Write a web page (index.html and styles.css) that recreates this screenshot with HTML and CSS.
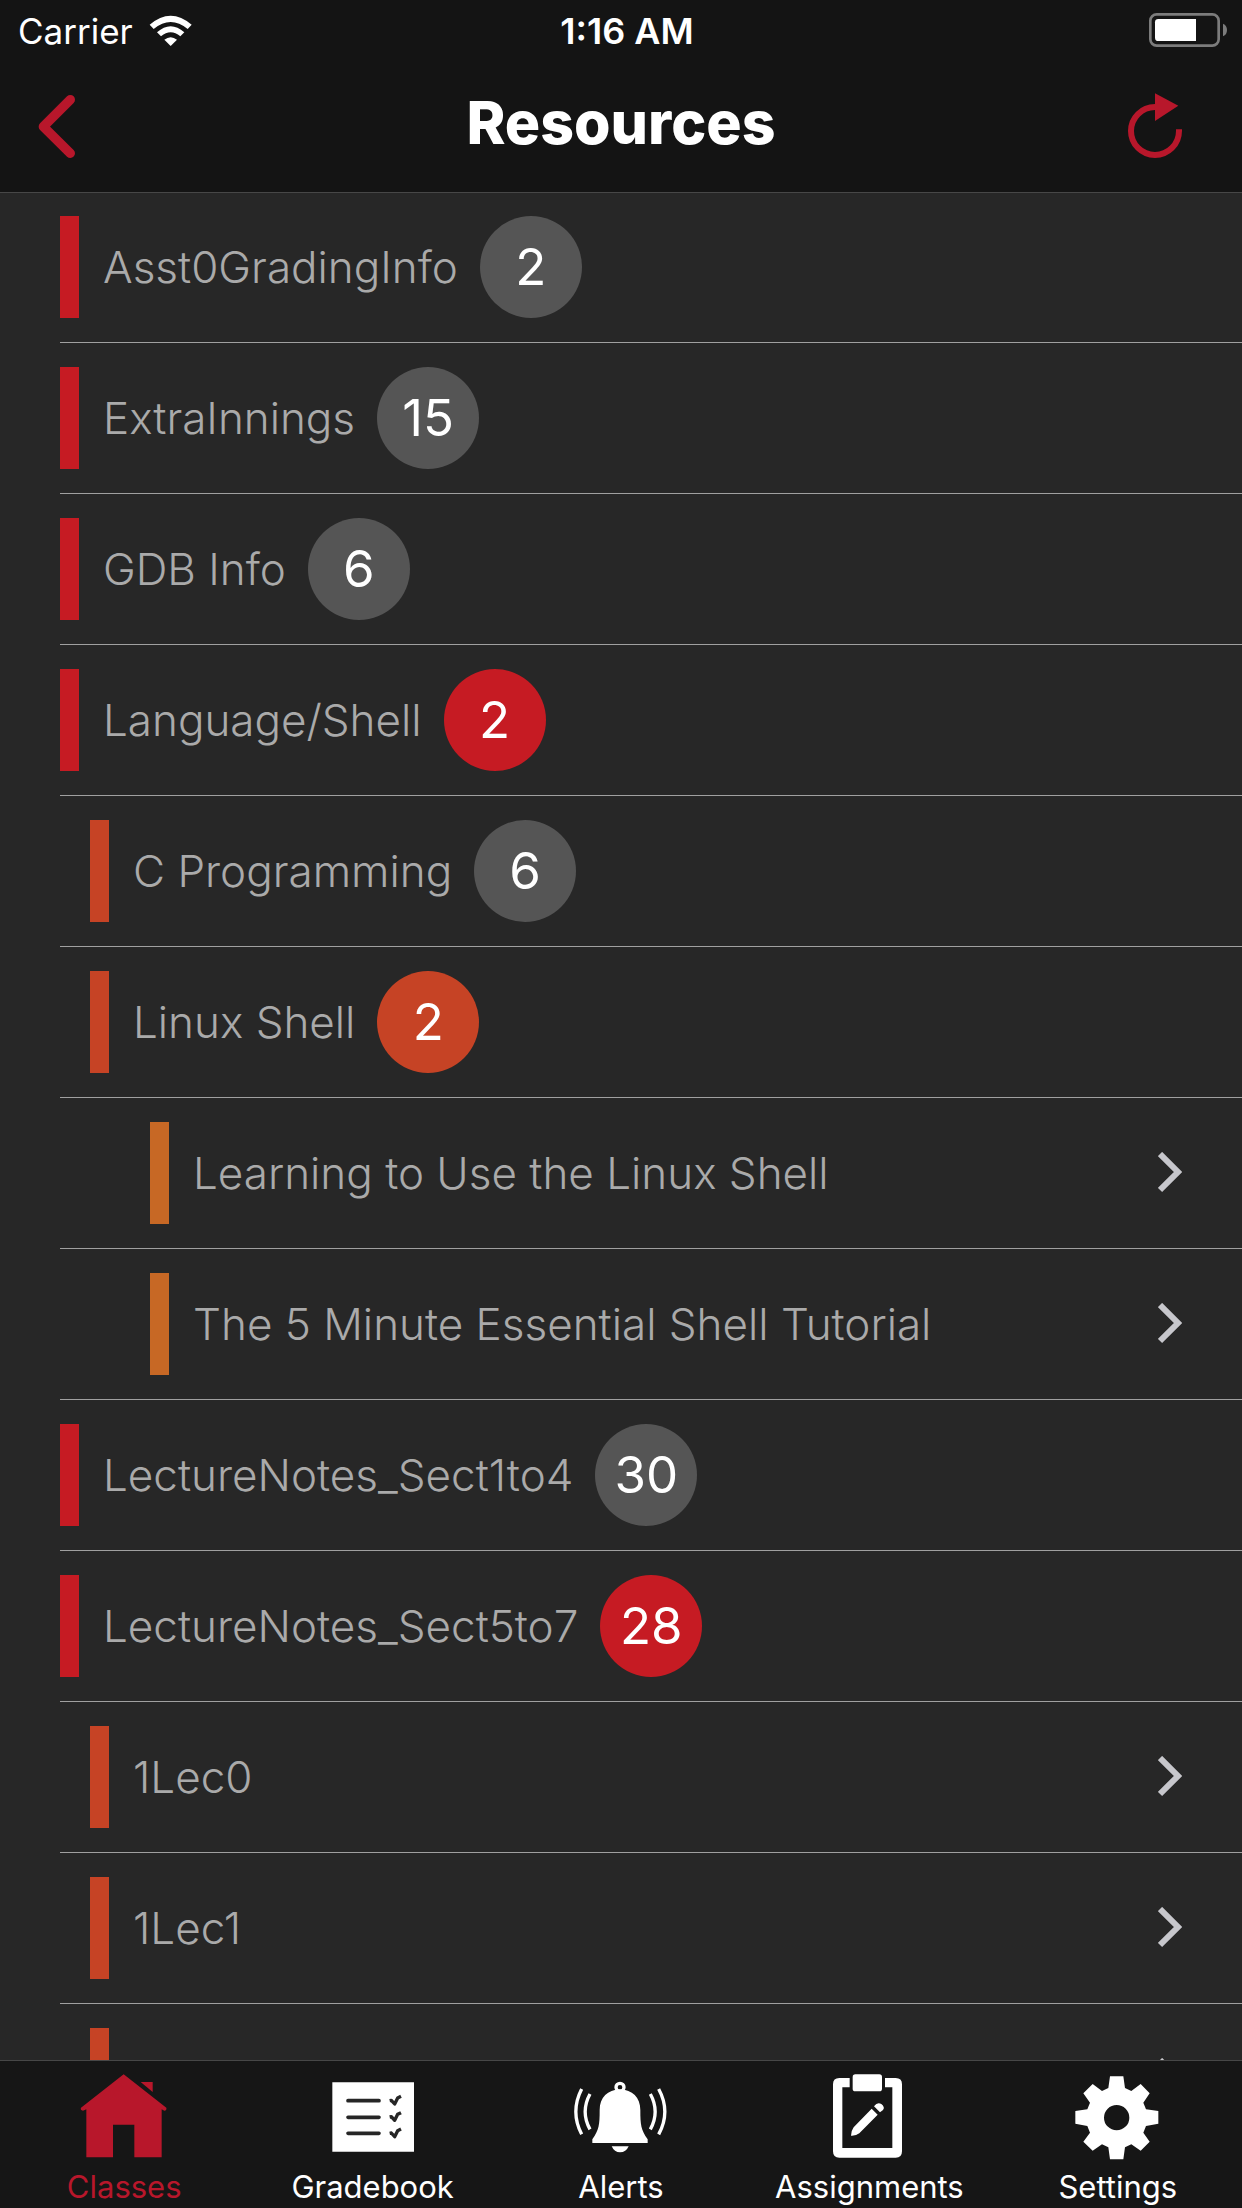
FILE: index.html
```html
<!DOCTYPE html>
<html lang="en">
<head>
<meta charset="utf-8">
<meta name="viewport" content="width=device-width, initial-scale=1">
<title>Resources</title>
<link rel="stylesheet" href="styles.css">
</head>
<body>
<div class="app">
  <header class="header">
    <div class="status">
      <div class="status-left">
        <span>Carrier</span>
        <svg class="wifi" viewBox="448 42 132 96" aria-hidden="true">
          <path d="M450 71Q513 17 576 71L564 84Q513 42 462 84Z"/>
          <path d="M472 94Q513 58 554 94L542 106Q513 82 484 106Z"/>
          <path d="M494 116Q513 101 532 116L513 135Z"/>
        </svg>
      </div>
      <span class="time">1:16 AM</span>
      <svg class="battery" viewBox="204 39 240 108" aria-hidden="true">
        <rect class="battery-case" x="211" y="43" width="205" height="94" rx="19"/>
        <path class="battery-level" d="M235 57H348V123H235Q225 123 225 113V67Q225 57 235 57Z"/>
        <path class="battery-cap" d="M429 71Q441 76 441 90Q441 104 429 109Z"/>
      </svg>
    </div>
    <div class="nav">
      <button class="nav-button" type="button" aria-label="Back">
        <svg class="nav-icon" viewBox="114 279 114 198" aria-hidden="true"><path class="back-line" d="M211 299L130 380L211 460"/></svg>
      </button>
      <h1 class="title">Resources</h1>
      <button class="nav-button nav-button-end" type="button" aria-label="Refresh">
        <svg class="nav-icon" viewBox="138 279 168 198" aria-hidden="true">
          <path class="refresh-line" d="M228 321H225A72 72 0 1 0 297 393V388"/>
          <path class="refresh-head" d="M225 280L295 317L225 363Z"/>
        </svg>
      </button>
    </div>
  </header>

  <main class="content">
    <ul class="list">
      <li><button class="row level-1" type="button"><span class="label">Asst0GradingInfo</span><span class="badge">2</span></button></li>
      <li><button class="row level-1" type="button"><span class="label">ExtraInnings</span><span class="badge">15</span></button></li>
      <li><button class="row level-1" type="button"><span class="label">GDB Info</span><span class="badge">6</span></button></li>
      <li><button class="row level-1 open" type="button" aria-expanded="true"><span class="label">Language/Shell</span><span class="badge">2</span></button></li>
      <li><button class="row level-2" type="button"><span class="label">C Programming</span><span class="badge">6</span></button></li>
      <li><button class="row level-2 open" type="button" aria-expanded="true"><span class="label">Linux Shell</span><span class="badge">2</span></button></li>
      <li><a class="row level-3" href="#learning"><span class="label">Learning to Use the Linux Shell</span><svg class="chevron" viewBox="0 0 24 42" aria-hidden="true"><path d="M2 2L20 20L2 38"/></svg></a></li>
      <li><a class="row level-3" href="#tutorial"><span class="label">The 5 Minute Essential Shell Tutorial</span><svg class="chevron" viewBox="0 0 24 42" aria-hidden="true"><path d="M2 2L20 20L2 38"/></svg></a></li>
      <li><button class="row level-1" type="button"><span class="label">LectureNotes_Sect1to4</span><span class="badge">30</span></button></li>
      <li><button class="row level-1 open" type="button" aria-expanded="true"><span class="label">LectureNotes_Sect5to7</span><span class="badge">28</span></button></li>
      <li><a class="row level-2" href="#lec0"><span class="label">1Lec0</span><svg class="chevron" viewBox="0 0 24 42" aria-hidden="true"><path d="M2 2L20 20L2 38"/></svg></a></li>
      <li><a class="row level-2" href="#lec1"><span class="label">1Lec1</span><svg class="chevron" viewBox="0 0 24 42" aria-hidden="true"><path d="M2 2L20 20L2 38"/></svg></a></li>
      <li><a class="row level-2" href="#lec2" aria-label="Next lecture"><svg class="chevron" viewBox="0 0 24 42" aria-hidden="true"><path d="M2 2L20 20L2 38"/></svg></a></li>
    </ul>
  </main>

  <nav class="tabs" aria-label="Main">
    <a class="tab active" href="#classes" aria-current="page">
      <svg class="tab-icon" viewBox="228 60 288 270" aria-hidden="true">
        <path d="M371 73L499 173Q501 181 493 182L485 178V322H403V224H339V322H259V178L249 182Q240 180 243 173Z"/>
        <path d="M422 96H458V126Z"/>
      </svg>
      <span>Classes</span>
    </a>
    <a class="tab" href="#gradebook">
      <svg class="tab-icon" viewBox="224 60 288 270" aria-hidden="true">
        <path d="M246 97H491V305H246Z"/>
        <path class="ink-thick" d="M293 152H386M293 202H386M293 250H386"/>
        <path class="ink" d="M418 152L423 151L433 162L442 144L452 139M418 201L423 200L433 211L442 193L452 188M418 250L423 249L433 260L442 242L452 237"/>
      </svg>
      <span>Gradebook</span>
    </a>
    <a class="tab" href="#alerts">
      <svg class="tab-icon" viewBox="219 60 288 270" aria-hidden="true">
        <circle class="line" cx="360" cy="112" r="12"/>
        <path d="M360 118C397 119 421 143 421 180C421 225 423 239 443 268V279H277V268C297 239 299 225 299 180C299 143 323 119 360 118Z"/>
        <path d="M335 289H386Q378 307 360 307Q343 307 335 289Z"/>
        <path class="line" d="M270 132Q241 185 270 238M245 117Q210 185 245 253M451 132Q480 185 451 238M476 117Q513 185 476 253"/>
      </svg>
      <span>Alerts</span>
    </a>
    <a class="tab" href="#assignments">
      <svg class="tab-icon" viewBox="214 60 288 270" aria-hidden="true">
        <path d="M300 84V112H278V294H428V112H406V84H438Q457 84 457 103V304Q457 323 438 323H269Q250 323 250 304V103Q250 84 269 84Z"/>
        <rect x="309" y="73" width="88" height="51" rx="8"/>
        <path d="M366 176L384 194L329 250Q319 258 304 257Q304 243 312 232ZM373 169Q383 155 395 162Q407 172 400 180L391 187Z"/>
      </svg>
      <span>Assignments</span>
    </a>
    <a class="tab" href="#settings">
      <svg class="tab-icon" viewBox="240 60 288 270" aria-hidden="true">
        <path fill-rule="evenodd" d="M360 79H400L405 114L424 123L452 102L479 130L460 158L468 178L505 183V221L468 228L460 248L479 275L452 302L424 283L405 292L400 328H360L355 292L336 283L308 302L280 275L300 248L292 228L256 221V183L292 178L300 158L280 130L308 102L336 123L355 114ZM380 165A38 38 0 1 0 380 241A38 38 0 1 0 380 165Z"/>
      </svg>
      <span>Settings</span>
    </a>
  </nav>
</div>
</body>
</html>
```
FILE: styles.css
```css
:root {
  --tint: #b8172b;
  --bar: #141414;
  --hairline: #474747;
}

* { box-sizing: border-box; }

body {
  margin: 0;
  background: #272727;
  color: #fff;
  font-family: Inter, "Liberation Sans", sans-serif;
}

button {
  padding: 0;
  border: 0;
  background: none;
  color: inherit;
  font: inherit;
  text-align: left;
}

a {
  color: inherit;
  text-decoration: none;
}

svg { display: block; flex: none; }

.app {
  display: flex;
  flex-direction: column;
  height: 100vh;
}

/* Header: status line and navigation */
.header {
  position: relative;
  flex: none;
  background: var(--bar);
  box-shadow: 0 1px var(--hairline);
}

.status {
  display: grid;
  grid-template-columns: 1fr auto 1fr;
  align-items: center;
  height: 60px;
  padding: 2px 14px 0 18px;
  font-size: 35px;
  line-height: 44px;
}

.status-left {
  display: flex;
  align-items: center;
  gap: 16px;
}

.wifi { width: 44px; height: 32px; fill: #fff; }
.time { padding-left: 8px; font-size: 36px; font-weight: 600; }
.battery { width: 80px; height: 36px; justify-self: end; }
.battery-case { fill: none; stroke: #7c7c7c; stroke-width: 8; }
.battery-level { fill: #fff; }
.battery-cap { fill: #7c7c7c; }

.nav {
  display: grid;
  grid-template-columns: 1fr auto 1fr;
  align-items: center;
  height: 132px;
  padding: 0 60px 0 38px;
}

.nav-button-end { justify-self: end; }
.nav-icon { height: 66px; }
.back-line { fill: none; stroke: var(--tint); stroke-width: 28; stroke-linecap: round; stroke-linejoin: round; }
.refresh-line { fill: none; stroke: var(--tint); stroke-width: 18; }
.refresh-head { fill: var(--tint); }

.title {
  margin: 0;
  padding: 0 0 6px 22px;
  font-size: 59px;
  font-weight: 800;
  line-height: 72px;
}

/* Resource list */
.content {
  flex: 1;
  min-height: 0;
  overflow: hidden;
}

.list {
  margin: 0;
  padding: 0 0 0 60px;
  list-style: none;
}

.row {
  display: flex;
  align-items: center;
  width: 100%;
  height: 151px;
  padding-right: 60px;
  border-bottom: 1px solid #a0a0a0;
}

.row::before {
  content: "";
  flex: none;
  width: 19px;
  height: 102px;
  margin-right: 24px;
  background: var(--level);
}

.level-1 { --level: #c61b23; }
.level-2 { --level: #c64325; padding-left: 30px; }
.level-3 { --level: #c76825; padding-left: 90px; }

.label {
  color: #aaa;
  font-size: 44px;
  font-weight: 300;
  line-height: 54px;
}

.badge {
  width: 102px;
  height: 102px;
  margin-left: 22px;
  border-radius: 50%;
  background: #555;
  font-size: 51px;
  line-height: 102px;
  text-align: center;
}

.open .badge { background: var(--level); }

.chevron {
  width: 24px;
  height: 42px;
  margin-left: auto;
  fill: none;
  stroke: #c7c7cc;
  stroke-width: 6;
}

/* Tab bar */
.tabs {
  position: relative;
  display: grid;
  grid-template-columns: repeat(5, 1fr);
  flex: none;
  padding: 9px 0 3px;
  border-top: 1px solid var(--hairline);
  background: #161616;
}

.tab {
  display: flex;
  flex-direction: column;
  align-items: center;
  gap: 9px;
  font-size: 31px;
  line-height: 36px;
}

.active { color: var(--tint); }
.tab-icon { width: 96px; height: 90px; fill: currentColor; }
.line { fill: none; stroke: currentColor; stroke-width: 10; }
.ink, .ink-thick { fill: none; stroke: #262626; stroke-width: 10; stroke-linejoin: round; }
.ink-thick { stroke-width: 11; stroke-linecap: round; }
```
